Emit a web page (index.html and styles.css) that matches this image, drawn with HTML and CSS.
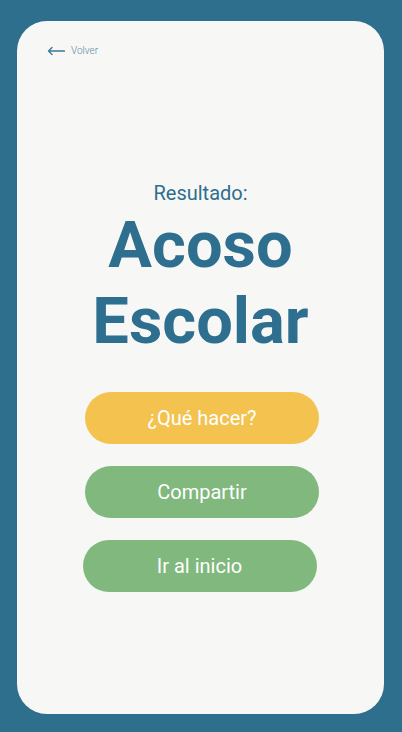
FILE: index.html
```html
<!DOCTYPE html>
<html lang="es">
  <head>
    <meta charset="UTF-8" />
    <meta name="viewport" content="width=device-width, initial-scale=1.0" />
    <title>Resultado</title>
    <link rel="stylesheet" href="styles.css">
  </head>
  <body>
    <main class="card">
      <a class="back-link" href="#">
        <svg class="back-icon" width="18" height="10" viewBox="0 0 18 10" aria-hidden="true">
          <path d="M17.5 5H1.5M5 1.5L1.5 5L5 8.5" fill="none" stroke="currentColor" stroke-width="1.3" stroke-linecap="round" stroke-linejoin="round"/>
        </svg>
        <span>Volver</span>
      </a>

      <section class="result">
        <p class="result-label">Resultado:</p>
        <h1 class="result-title">Acoso<br>Escolar</h1>
      </section>

      <nav class="actions">
        <a class="btn btn-yellow" href="#">¿Qué hacer?</a>
        <a class="btn btn-green" href="#">Compartir</a>
        <a class="btn btn-green btn-shift" href="#">Ir al inicio</a>
      </nav>
    </main>
  </body>
</html>
```

FILE: styles.css
```css
body {
  margin: 0;
  background-color: #2e6f8e;
  font-family: Roboto, "Liberation Sans", sans-serif;
}
.card {
  margin: 21px 18px 0 17px;
  height: 693px;
  background-color: #f7f7f5;
  border-radius: 30px;
  box-sizing: border-box;
  padding-top: 24px;
}
.back-link {
  display: flex;
  align-items: center;
  gap: 6px;
  margin-left: 30px;
  height: 12px;
  color: #5a8ca5;
  font-size: 10px;
  font-weight: 300;
  line-height: 12px;
  text-decoration: none;
}
.back-icon {
  display: block;
  color: #3d7896;
}
.result {
  margin-top: 124px;
  text-align: center;
  color: #2e6e8e;
}
.result-label {
  margin: 0 0 2px;
  font-size: 20px;
  line-height: 24px;
}
.result-title {
  margin: 0;
  font-size: 65px;
  line-height: 76px;
  font-weight: 700;
}
.actions {
  display: flex;
  flex-direction: column;
  align-items: center;
  gap: 22px;
  margin-top: 33px;
  padding-left: 3px;
}
.btn {
  display: flex;
  align-items: center;
  justify-content: center;
  width: 234px;
  height: 52px;
  border-radius: 26px;
  color: #fff;
  font-size: 20px;
  text-decoration: none;
}
.btn-yellow {
  background-color: #f3c24f;
}
.btn-green {
  background-color: #80b87e;
}
.btn-shift {
  margin-right: 5px;
}
```
